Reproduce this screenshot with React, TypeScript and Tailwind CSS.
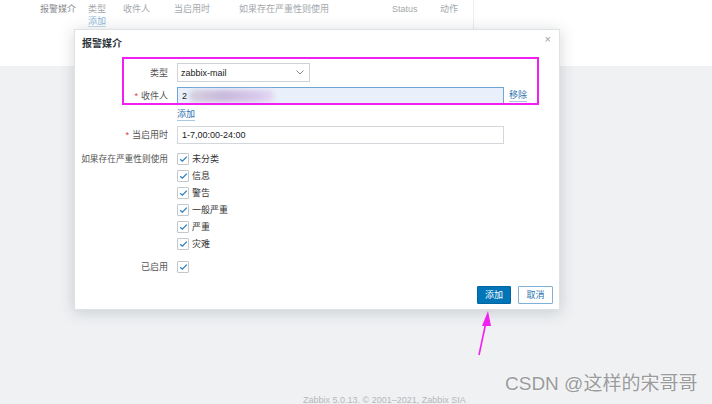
import React from "react";

const font = { fontFamily: '"Liberation Sans", Arial, "Noto Sans CJK SC", sans-serif' };

function Check() {
  return (
    <span className="w-[12px] h-[12px] border border-[#c3c8cd] rounded-[1px] bg-white flex items-center justify-center shrink-0">
      <svg width="9" height="8" viewBox="0 0 9 8">
        <polyline points="1.2,4.2 3.4,6.2 7.8,1.6" fill="none" stroke="#2b7fc0" strokeWidth="1.3" />
      </svg>
    </span>
  );
}

function CheckRow({ label }: { label: string }) {
  return (
    <div className="h-[17px] flex items-center gap-[3px]">
      <Check />
      <span className="text-[9px] text-[#333]">{label}</span>
    </div>
  );
}

export default function App() {
  const severities = ["未分类", "信息", "警告", "一般严重", "严重", "灾难"];
  return (
    <div className="w-[712px] h-[404px] relative overflow-hidden bg-[#eff1f3]" style={font}>
      {/* page header band */}
      <div className="h-[66px] bg-white flex">
        <div className="w-[76px] text-right pt-[4px] text-[9px] leading-[10px] text-[#8a8d91]">报警媒介</div>
        <div className="ml-[12px] w-[386px] border-r border-[#eceef0] pt-[4px]">
          <div className="flex text-[9px] leading-[10px] text-[#a4a8ac]">
            <span className="w-[35px]">类型</span>
            <span className="w-[51px]">收件人</span>
            <span className="w-[65px]">当启用时</span>
            <span className="w-[153px]">如果存在严重性则使用</span>
            <span className="w-[48px]">Status</span>
            <span>动作</span>
          </div>
          <div className="mt-[2px] text-[9px] leading-[10px] text-[#8db6d6]">
            <span className="border-b border-[#c5dbea]">添加</span>
          </div>
        </div>
      </div>

      {/* footer */}
      <div className="absolute left-[303px] top-[395px] text-[9px] leading-[10px] text-[#b5b8bb] whitespace-nowrap">
        Zabbix 5.0.13. © 2001–2021, Zabbix SIA
      </div>

      {/* modal */}
      <div className="absolute left-[74px] top-[29px] w-[486px] h-[281px] bg-white border border-[#dfe2e5] shadow-[0_2px_14px_rgba(60,70,80,0.22)]">
        <div className="absolute right-[8px] top-[3px] text-[11px] leading-[12px] text-[#9da2a6]">×</div>
        <div className="pl-[7px] pt-[8px] text-[10px] leading-[12px] font-bold text-[#2d3439]">报警媒介</div>

        <div className="mt-[13px] pl-[6px] pr-[6px] flex flex-col text-[9px] leading-[10px] text-[#333]">
          {/* 类型 */}
          <div className="flex items-center h-[19px]">
            <div className="w-[87px] text-right text-[#555]">类型</div>
            <div className="ml-[9px] w-[133px] h-[19px] border border-[#cfd3d7] bg-white flex items-center justify-between pl-[3px] pr-[5px]">
              <span className="text-[9px] text-[#222]">zabbix-mail</span>
              <svg width="8" height="5" viewBox="0 0 8 5">
                <polyline points="0.5,0.5 4,4 7.5,0.5" fill="none" stroke="#777" strokeWidth="0.9" />
              </svg>
            </div>
          </div>
          {/* 收件人 */}
          <div className="flex items-center h-[18px] mt-[5px]">
            <div className="w-[87px] text-right text-[#555]">
              <span className="text-[#d04040] mr-[3px]">*</span>收件人
            </div>
            <div className="ml-[9px] w-[327px] h-[18px] border border-[#6fa6d4] bg-[#e9f0fb] flex items-center pl-[4px]">
              <span className="text-[#222]">2</span>
              <span className="ml-[2px] h-[12px] w-[86px] rounded-full bg-[linear-gradient(90deg,#d7d2df,#c9b9dc_40%,#d9c9ec_80%,#e8dcf5)] blur-[2px]" />
            </div>
            <span className="ml-[5px] text-[#2b72b0] border-b border-[#a9c8e3] leading-[11px]">移除</span>
          </div>
          {/* 添加 */}
          <div className="flex h-[14px] mt-[3px] items-center">
            <div className="w-[87px]" />
            <span className="ml-[9px] text-[#2b72b0] border-b border-[#a9c8e3] leading-[11px]">添加</span>
          </div>
          {/* 当启用时 */}
          <div className="flex items-center h-[18px] mt-[4px]">
            <div className="w-[87px] text-right text-[#555]">
              <span className="text-[#d04040] mr-[3px]">*</span>当启用时
            </div>
            <div className="ml-[9px] w-[327px] h-[18px] border border-[#d3d7db] bg-white flex items-center pl-[4px]">
              <span className="text-[#222]">1-7,00:00-24:00</span>
            </div>
          </div>
          {/* severities */}
          <div className="flex mt-[6px]">
            <div className="w-[87px] shrink-0 h-[17px] flex items-center justify-end">
              <span className="whitespace-nowrap text-[#555] text-[8.7px]">如果存在严重性则使用</span>
            </div>
            <div className="ml-[9px] flex flex-col">
              {severities.map((s) => (
                <CheckRow key={s} label={s} />
              ))}
            </div>
          </div>
          {/* 已启用 */}
          <div className="flex mt-[6px] h-[17px] items-center">
            <div className="w-[87px] text-right text-[#555]">已启用</div>
            <div className="ml-[9px]">
              <Check />
            </div>
          </div>
          {/* buttons */}
          <div className="flex justify-end gap-[7px] mt-[11px]">
            <button className="w-[34px] h-[18px] bg-[#0275b8] border border-[#0066a1] text-white text-[9px] leading-[10px] rounded-[1px]">添加</button>
            <button className="w-[35px] h-[18px] bg-white border border-[#7fb0d8] text-[#2b72b0] text-[9px] leading-[10px] rounded-[1px]">取消</button>
          </div>
        </div>

        {/* magenta annotation box */}
        <div className="absolute left-[47px] top-[27px] w-[417px] h-[48px] border-2 border-[#f21ef2]" />
      </div>

      {/* arrow annotation */}
      <svg className="absolute left-0 top-0" width="712" height="404" viewBox="0 0 712 404">
        <line x1="479" y1="355" x2="486" y2="322" stroke="#f21ef2" strokeWidth="1.6" />
        <polygon points="488,311 482,326 491,326" fill="#f21ef2" />
      </svg>

      {/* watermark */}
      <div className="absolute left-[505px] top-[372px] text-[19px] leading-[24px] text-[#9b9b9b] whitespace-nowrap [text-shadow:0_0_2px_#ffffff]">
        CSDN @这样的宋哥哥
      </div>
    </div>
  );
}
